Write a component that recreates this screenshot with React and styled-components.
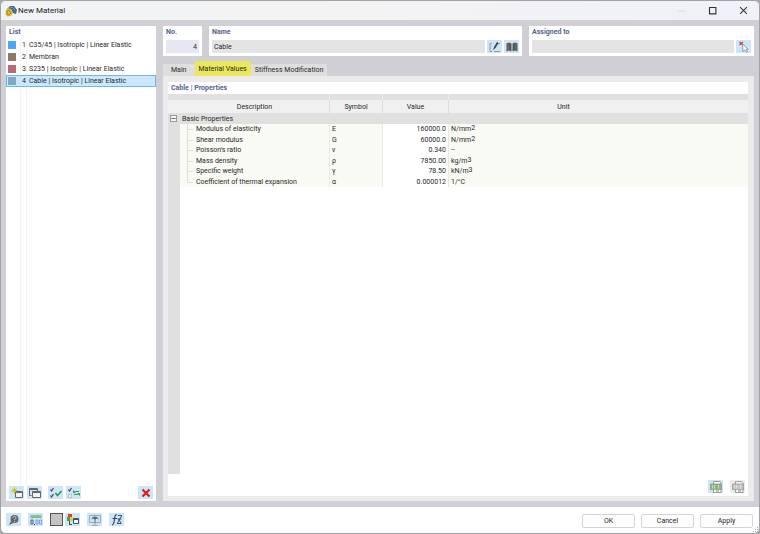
import { useState } from "react";
import styled, { createGlobalStyle } from "styled-components";

const GlobalStyle = createGlobalStyle`
  * {
    box-sizing: border-box;
  }
  body {
    margin: 0;
    background: #a9a8ac;
    color: #282828;
    font-family: Roboto, "Noto Sans", sans-serif;
    font-size: 7px;
    line-height: 10px;
  }
  button,
  input {
    margin: 0;
    padding: 0;
    border: 0;
    color: inherit;
    font: inherit;
  }
`;

const Window = styled.div`
  display: flex;
  flex-direction: column;
  height: 100vh;
  border: 1px solid #a3a2a6;
  border-radius: 6px;
  background: #fff;
  overflow: hidden;
`;

const TitleBar = styled.header`
  display: flex;
  align-items: center;
  height: 19px;
  flex: none;
  padding-left: 4px;
  background: linear-gradient(90deg, #f1f3f6, #f3f3f3 40%, #f0f1f8);
`;

const Title = styled.h1`
  flex: 1;
  margin: 0 0 0 1px;
  font-size: 8px;
  font-weight: 400;
  color: #202020;
`;

const WindowButton = styled.button`
  display: grid;
  place-items: center;
  width: 31px;
  height: 19px;
  background: none;
`;

const Body = styled.main`
  display: flex;
  flex: 1;
  gap: 7px;
  min-height: 0;
  padding: 6px 5px;
  background: #d0cfd5;
`;

const Sidebar = styled.aside`
  display: flex;
  flex-direction: column;
  flex: none;
  width: 150px;
  background: #fff;
`;

const Heading = styled.h2`
  margin: 0;
  padding: 1px 3px;
  font-size: 7px;
  font-weight: 700;
  line-height: 10px;
  color: #536390;
`;

const List = styled.ul`
  flex: 1;
  margin: 0;
  padding: 1px 0 0;
  list-style: none;
  background: linear-gradient(#f3f3f3, #f3f3f3) 14px 0 / 1px 100% no-repeat,
    linear-gradient(#f3f3f3, #f3f3f3) 20px 0 / 1px 100% no-repeat;
`;

const ListItem = styled.button`
  display: flex;
  align-items: center;
  width: 100%;
  height: 12px;
  padding: 0 1px;
  border: 1px solid ${(props) => (props.$active ? "#70b8e4" : "transparent")};
  background: ${(props) => (props.$active ? "#cbe8ff" : "transparent")};
  text-align: left;
`;

const Swatch = styled.span`
  width: 8px;
  height: 8px;
  background: ${(props) => props.$color};
`;

const ItemNumber = styled.span`
  width: 10px;
  margin-right: 3px;
  text-align: right;
`;

const SidebarTools = styled.div`
  display: flex;
  gap: 3px;
  padding: 0 3px 2px;
`;

const IconButton = styled.button`
  display: grid;
  place-items: center;
  flex: none;
  width: 15px;
  height: 13px;
  margin-left: ${(props) => (props.$push ? "auto" : props.$gap ? "3px" : "0")};
  background: ${(props) => (props.disabled ? "#ececec" : "#cce5f8")};
`;

const Content = styled.section`
  display: flex;
  flex-direction: column;
  flex: 1;
  min-width: 0;
`;

const Fields = styled.div`
  display: flex;
  gap: 7px;
  height: 30px;
  flex: none;
`;

const Field = styled.div`
  display: flex;
  flex-direction: column;
  flex: ${(props) => props.$flex};
  min-width: 0;
  padding: 1px 3px 2px;
  background: #fff;
`;

const Label = styled.label`
  font-weight: 700;
  line-height: 10px;
  color: #536390;
`;

const FieldRow = styled.div`
  display: flex;
  gap: 2px;
  margin-top: 3px;
`;

const Input = styled.input`
  flex: 1;
  min-width: 0;
  height: 13px;
  padding: 1px 2px 0;
  background: ${(props) => (props.$tint ? "#e7e7f3" : "#e4e4e4")};
  text-align: ${(props) => (props.$tint ? "right" : "left")};
`;

const Tabs = styled.div`
  display: flex;
  align-items: flex-end;
  flex: none;
  height: 20px;
`;

const Tab = styled.button`
  height: ${(props) => (props.$active ? "15px" : "12px")};
  padding: 0 ${(props) => (props.$wide ? "8px" : "4px")};
  background: ${(props) => (props.$active ? "#eae75b" : "#dedede")};
  white-space: nowrap;
`;

const TabPanel = styled.div`
  display: flex;
  flex: 1;
  min-height: 0;
  padding: 6px 6px 5px 5px;
  background: #ebebeb;
`;

const Properties = styled.div`
  display: flex;
  flex-direction: column;
  flex: 1;
  min-width: 0;
  background: #fff;
`;

const Table = styled.table`
  width: 100%;
  table-layout: fixed;
  border-collapse: separate;
  border-spacing: 0;
`;

const Strip = styled.tr`
  height: 6px;
  background: #e0e0e0;
`;

const StripCell = styled.td`
  padding: 0;
  border-left: ${(props) => (props.$line ? "1px solid #ebebeb" : "0")};
`;

const Cell = styled.td`
  padding: 0 2px;
  border-left: 1px solid #e9e9e7;
  line-height: 9px;
  text-align: ${(props) => (props.$right ? "right" : "left")};
  background: ${(props) => (props.$right ? "#fff" : "#f9faf4")};
  white-space: nowrap;

  sup {
    font-size: 7px;
    line-height: 0;
    vertical-align: 1px;
  }
`;

const HeadCell = styled.th`
  height: 13px;
  padding: 0 ${(props) => (props.$last ? "70px" : "0")} 0 0;
  border-left: ${(props) => (props.$line ? "1px solid #dcdcdc" : "0")};
  background: #f0f0f0;
  font-weight: 400;
`;

const GutterCell = styled.td`
  padding: 0;
  background: #e0e0e0;
`;

const GroupRow = styled.tr`
  height: 11px;
  background: #e0e0e0;
`;

const GroupCell = styled.th`
  padding: 0 2px;
  font-weight: 400;
  text-align: left;
`;

const Toggle = styled.button`
  display: grid;
  place-items: center;
  width: 7px;
  height: 7px;
  margin-left: 2px;
  border: 1px solid #9a9a9a;
  background: #f4f4f4;
`;

const PropertyRow = styled.tr`
  height: 10px;

  &:nth-child(even) {
    height: 11px;
  }
`;

const NameCell = styled(Cell)`
  padding: 0 0 0 16px;
  border: 0;
  background: linear-gradient(#dfe0db, #dfe0db) 7px 5px / 6px 1px no-repeat,
    linear-gradient(#dfe0db, #dfe0db) 7px 0 / 1px
      ${(props) => (props.$last ? "6px" : "100%")} no-repeat,
    #f9faf4;
`;

const Gutter = styled.div`
  flex: 1;
  width: 12px;
  background: #e0e0e0;
`;

const PanelTools = styled.div`
  display: flex;
  justify-content: flex-end;
  gap: 7px;
  height: 22px;
  padding: 6px 3px 3px;
`;

const Footer = styled.footer`
  display: flex;
  align-items: center;
  flex: none;
  gap: 7px;
  height: 26px;
  padding: 0 5px 1px;
`;

const ColorButton = styled.button`
  width: 13px;
  height: 13px;
  margin-right: -5px;
  border: 1px solid #555;
  background: #c4c4c4;
`;

const Actions = styled.div`
  display: flex;
  gap: 6px;
  margin: 2px 1px 0 auto;
`;

const Button = styled.button`
  width: 53px;
  height: 14px;
  border: 1px solid #d5d5d5;
  border-radius: 2px;
  background: #fdfdfd;
`;

const Grip = styled.svg`
  position: absolute;
  right: 1px;
  bottom: 1px;
`;

const materials = [
  { no: 1, name: "C35/45 | Isotropic | Linear Elastic", color: "#4da6ff" },
  { no: 2, name: "Membran", color: "#8b7b66" },
  { no: 3, name: "S235 | Isotropic | Linear Elastic", color: "#b96b6f" },
  { no: 4, name: "Cable | Isotropic | Linear Elastic", color: "#7fa9c6" },
];

const tabs = ["Main", "Material Values", "Stiffness Modification"];

const properties = [
  { name: "Modulus of elasticity", symbol: "E", value: "160000.0", unit: "N/mm", power: "2" },
  { name: "Shear modulus", symbol: "G", value: "60000.0", unit: "N/mm", power: "2" },
  { name: "Poisson's ratio", symbol: "ν", value: "0.340", unit: "--" },
  { name: "Mass density", symbol: "ρ", value: "7850.00", unit: "kg/m", power: "3" },
  { name: "Specific weight", symbol: "γ", value: "78.50", unit: "kN/m", power: "3" },
  { name: "Coefficient of thermal expansion", symbol: "α", value: "0.000012", unit: "1/°C" },
];

const Icon = ({ children, size = 12 }) => (
  <svg width={size} height={size} viewBox="0 0 12 12" fill="none" aria-hidden="true">
    {children}
  </svg>
);

const AppIcon = () => (
  <Icon>
    <path d="M2 4 5 1h4l3 4-1 4-3-1-2-4z" fill="#42668f" />
    <path d="M5 2.500h3l2 3" stroke="#7c9cbb" />
    <path d="m1 5 2-2 3 1 2 4-2 3-4 .500L.500 9z" fill="#e3b832" />
    <path d="m2 6 2-1 2 3-2 2-2-1z" stroke="#9c792c" strokeWidth=".8" />
  </Icon>
);

const NewIcon = () => (
  <Icon>
    <path d="M4.500 4.500h7v6h-7z" fill="#eef3f6" stroke="#666" />
    <path d="M4.500 5.500h7" stroke="#666" />
    <path d="M3.500.500v6M.500 3.500h6M1.500 1.500l4 4m0-4-4 4" stroke="#d1bd25" />
  </Icon>
);

const CopyIcon = () => (
  <Icon>
    <path d="M2.500 8.500h-2v-7h8V4M.500 2.500h8" stroke="#666" />
    <path d="M3.500 4.500h8v6h-8z" fill="#f3f6f8" stroke="#666" />
    <path d="M3.500 5.500h8" stroke="#666" />
  </Icon>
);

const CheckAllIcon = () => (
  <Icon>
    <path d="m.500 2.500 1 1.500 2-3M.500 8.500l1 1.500 2-3" stroke="#444" strokeWidth="1.200" />
    <path d="m5.500 6 2 2.500 4-4.500" stroke="#229a49" strokeWidth="1.500" />
  </Icon>
);

const InvertIcon = () => (
  <Icon>
    <path d="m.500 2.500 1 1.500 2-3" stroke="#444" strokeWidth="1.200" />
    <path d="M.500 7.500h3v3h-3z" fill="#f4f7f9" stroke="#aaa" strokeWidth=".7" />
    <path d="M11 4.500H7.500c-1 0-1.500.500-2 1M5.500 3.500v2h2M6 7.500h3.500c1 0 1.500-.500 2-1M11.500 8.500v-2h-2" stroke="#309b53" />
  </Icon>
);

const DeleteIcon = () => (
  <Icon>
    <path d="m2.500 2.500 7 7m0-7-7 7" stroke="#ed1010" strokeWidth="2" />
  </Icon>
);

const EditIcon = () => (
  <Icon>
    <path d="M3 2.500H1v8h2M5 10.500h6M9 2.500h2" stroke="#888" strokeWidth=".8" />
    <path d="m4 9 1-3 3-5 1.500 1-3 5z" fill="#444" />
  </Icon>
);

const BookIcon = () => (
  <Icon>
    <path d="M.500 2.500 3 1.500l2.500 1v8l-2.500-1-2.500 1zM11.500 2.500 9 1.500l-2.500 1v8l2.500-1 2.500 1z" fill="#585858" />
    <path d="M2 3v6.500m8-6.500v6.500" stroke="#8c8c8c" strokeWidth=".6" />
  </Icon>
);

const PickIcon = () => (
  <Icon>
    <path d="m1.500 1 3.500 3m0-3L1.500 4" stroke="#e13434" strokeWidth="1.200" />
    <path d="m4.500 3 5.500 5-2 .500 1.500 2-1.200.800-1.500-2.300-1.800 1.500z" fill="#fff" stroke="#777" strokeWidth=".7" />
  </Icon>
);

const HelpIcon = () => (
  <Icon>
    <circle cx="6.500" cy="5" r="4" fill="#666" />
    <path d="m3 7-2 4 4.500-2z" fill="#666" />
    <path d="M5 4c0-2 3-2 3 0 0 1-1.500 1-1.500 2M6.500 7v1" stroke="#d9e2e8" strokeWidth=".8" />
  </Icon>
);

const DecimalsIcon = () => (
  <Icon>
    <path d="M.500 1h11v3H.500z" fill="#8bc586" />
    <path d="M2 3v1m2-1v1m2-1v1m2-1v1m2-1v1" stroke="#4a8a54" strokeWidth=".5" />
    <path d="M1 6h2v4H1z" stroke="#39464f" strokeWidth=".8" />
    <path d="M4.500 10v1" stroke="#39464f" />
    <path d="M6 6h2v4H6zm3.500 0h2v4h-2z" stroke="#5b9bdd" strokeWidth=".8" />
  </Icon>
);

const DisplayIcon = () => (
  <Icon>
    <path d="M1 0h4v3H1z" fill="#e33b32" />
    <path d="M0 3h3v4H0z" fill="#34a853" />
    <path d="M3 3h3v4H3z" fill="#e7ca35" />
    <path d="M2.500 7v3.500H5" stroke="#444" />
    <path d="M6.500 4.500h5v5h-5z" fill="#f7fafc" stroke="#456" />
    <path d="M6.500 5.500h5" stroke="#456" />
  </Icon>
);

const MonitorIcon = () => (
  <Icon>
    <path d="M.500 1.500h11v7H.500zM3 11.500h6M6 9v2" stroke="#9aabb6" />
    <path d="M2.500 5.500c0-4 7-4 7 0L8 4.500 6.500 5.500v3h-1v-3L4 4.500z" fill="#506e80" />
  </Icon>
);

const FormulaIcon = () => (
  <Icon>
    <path d="M6 1C4 0 4 2 3.500 5S3 11 1 11M1.500 4.500H6" stroke="#3c4a60" strokeWidth="1.200" />
    <path d="M7 1.500h4M6.500 5h4M6 9.500h4.500M6.500 9l4-7M7.500 5l2.500 4" stroke="#3c5578" strokeWidth="1" />
  </Icon>
);

const PrintIcon = ({ color }) => (
  <Icon>
    <path d="M3.500 3V.500h6L11 2v9.500H3.500V9" fill="#f5f8fa" stroke="#888" strokeWidth=".8" />
    <path d="M.500 3h11v5.500H.500z" fill={color} stroke="#888" strokeWidth=".6" />
    <path d="M2.500 4v3.500M4.500 4v3.500M8.500 4v3.500" stroke="#eef3e9" strokeWidth=".6" />
    <path d="M6 10h3" stroke="#888" />
  </Icon>
);

const App = () => {
  const [selected, setSelected] = useState(4);
  const [tab, setTab] = useState("Material Values");
  const [open, setOpen] = useState(true);

  return (
    <>
      <GlobalStyle />
      <Window>
        <TitleBar>
          <AppIcon />
          <Title>New Material</Title>
          <WindowButton aria-label="Minimize">
            <Icon size={8}>
              <path d="M1 6h10" stroke="#ccc" />
            </Icon>
          </WindowButton>
          <WindowButton aria-label="Maximize">
            <Icon size={9}>
              <path d="M2 2h8.500v8.500H2z" stroke="#333" strokeWidth="1.500" />
            </Icon>
          </WindowButton>
          <WindowButton aria-label="Close">
            <Icon size={9}>
              <path d="m1.500 1.500 9 9m0-9-9 9" stroke="#333" strokeWidth="1.400" />
            </Icon>
          </WindowButton>
        </TitleBar>

        <Body>
          <Sidebar>
            <Heading>List</Heading>
            <List>
              {materials.map((item) => (
                <li key={item.no}>
                  <ListItem $active={item.no === selected} onClick={() => setSelected(item.no)}>
                    <Swatch $color={item.color} />
                    <ItemNumber>{item.no}</ItemNumber>
                    {item.name}
                  </ListItem>
                </li>
              ))}
            </List>
            <SidebarTools>
              <IconButton aria-label="New"><NewIcon /></IconButton>
              <IconButton aria-label="Copy"><CopyIcon /></IconButton>
              <IconButton aria-label="Select all" $gap><CheckAllIcon /></IconButton>
              <IconButton aria-label="Invert selection"><InvertIcon /></IconButton>
              <IconButton aria-label="Delete" $push><DeleteIcon /></IconButton>
            </SidebarTools>
          </Sidebar>

          <Content>
            <Fields>
              <Field $flex="0 0 39px">
                <Label htmlFor="no">No.</Label>
                <FieldRow>
                  <Input id="no" $tint defaultValue="4" />
                </FieldRow>
              </Field>
              <Field $flex="314 1 0">
                <Label htmlFor="name">Name</Label>
                <FieldRow>
                  <Input id="name" defaultValue="Cable" />
                  <IconButton aria-label="Edit name"><EditIcon /></IconButton>
                  <IconButton aria-label="Library"><BookIcon /></IconButton>
                </FieldRow>
              </Field>
              <Field $flex="224 1 0">
                <Label htmlFor="assigned">Assigned to</Label>
                <FieldRow>
                  <Input id="assigned" />
                  <IconButton aria-label="Pick objects"><PickIcon /></IconButton>
                </FieldRow>
              </Field>
            </Fields>

            <Tabs role="tablist">
              {tabs.map((name) => (
                <Tab
                  key={name}
                  role="tab"
                  aria-selected={name === tab}
                  $active={name === tab}
                  $wide={name === "Main"}
                  onClick={() => setTab(name)}
                >
                  {name}
                </Tab>
              ))}
            </Tabs>

            <TabPanel role="tabpanel">
              <Properties>
                <Heading>Cable | Properties</Heading>
                <Table>
                  <colgroup>
                    <col width="12" />
                    <col width="149" />
                    <col width="53" />
                    <col width="66" />
                    <col />
                  </colgroup>
                  <thead>
                    <Strip>
                      <StripCell colSpan="2" />
                      <StripCell $line />
                      <StripCell $line />
                      <StripCell $line />
                    </Strip>
                    <tr>
                      <HeadCell as="td" />
                      <HeadCell>Description</HeadCell>
                      <HeadCell $line>Symbol</HeadCell>
                      <HeadCell $line>Value</HeadCell>
                      <HeadCell $line $last>Unit</HeadCell>
                    </tr>
                  </thead>
                  <tbody>
                    <GroupRow>
                      <GutterCell>
                        <Toggle aria-label="Basic Properties" aria-expanded={open} onClick={() => setOpen(!open)}>
                          <Icon size={5}>
                            <path d={open ? "M1 6h10" : "M1 6h10M6 1v10"} stroke="#555" strokeWidth="2" />
                          </Icon>
                        </Toggle>
                      </GutterCell>
                      <GroupCell colSpan="4">Basic Properties</GroupCell>
                    </GroupRow>
                    {open &&
                      properties.map((row, index) => (
                        <PropertyRow key={row.name}>
                          <GutterCell />
                          <NameCell $last={index === properties.length - 1}>{row.name}</NameCell>
                          <Cell>{row.symbol}</Cell>
                          <Cell $right>{row.value}</Cell>
                          <Cell>
                            {row.unit}
                            {row.power && <sup>{row.power}</sup>}
                          </Cell>
                        </PropertyRow>
                      ))}
                  </tbody>
                </Table>
                <Gutter />
                <PanelTools>
                  <IconButton aria-label="Print table"><PrintIcon color="#8db878" /></IconButton>
                  <IconButton aria-label="Print selection" disabled><PrintIcon color="#c5c5c5" /></IconButton>
                </PanelTools>
              </Properties>
            </TabPanel>
          </Content>
        </Body>

        <Footer>
          <IconButton aria-label="Help"><HelpIcon /></IconButton>
          <IconButton aria-label="Units and decimals"><DecimalsIcon /></IconButton>
          <ColorButton aria-label="Color" />
          <IconButton aria-label="Display"><DisplayIcon /></IconButton>
          <IconButton aria-label="Rendering"><MonitorIcon /></IconButton>
          <IconButton aria-label="Formula"><FormulaIcon /></IconButton>
          <Actions>
            <Button>OK</Button>
            <Button>Cancel</Button>
            <Button>Apply</Button>
          </Actions>
        </Footer>
        <Grip width="6" height="6" aria-hidden="true">
          <path d="M4 0h1v1H4zM2 2h1v1H2zM4 2h1v1H4zM0 4h1v1H0zM2 4h1v1H2zM4 4h1v1H4z" fill="#aaa" />
        </Grip>
      </Window>
    </>
  );
};

export default App;
